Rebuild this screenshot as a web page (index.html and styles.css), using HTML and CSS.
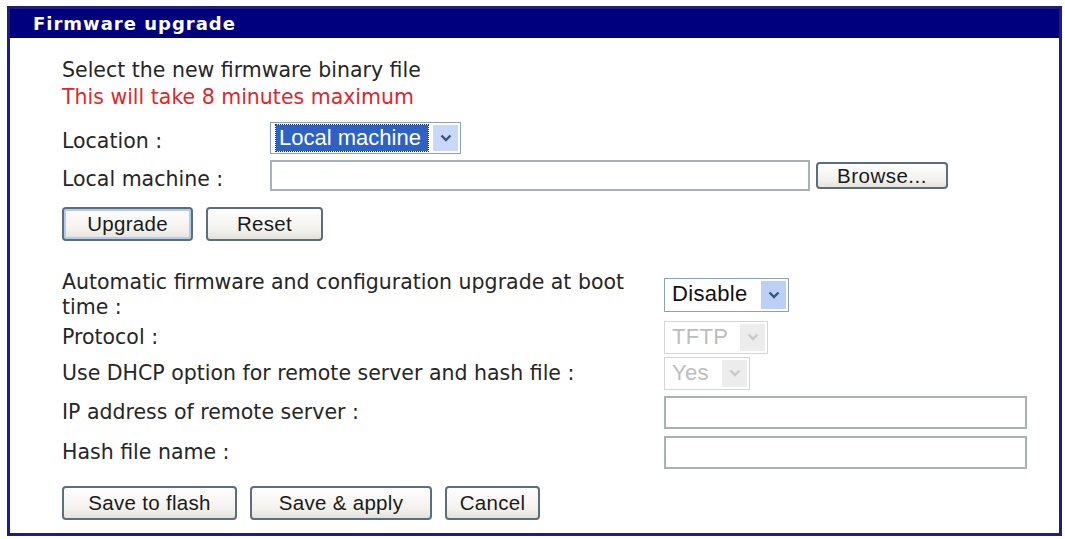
FILE: index.html
```html
<!DOCTYPE html>
<html lang="en">
<head>
    <meta charset="UTF-8">
    <meta name="viewport" content="width=device-width, initial-scale=1.0">
    <title>Firmware upgrade</title>
    <link rel="stylesheet" href="styles.css">
</head>
<body>
    <div class="panel">
        <div class="panel-title">Firmware upgrade</div>
        <div class="panel-body">
            <p class="intro">Select the new firmware binary file<br><span class="warn">This will take 8 minutes maximum</span></p>

            <div class="form-grid form-top">
                <span class="label">Location :</span>
                <div class="select select-location focused">
                    <span class="select-value">Local machine</span>
                    <span class="select-arrow"><svg viewBox="0 0 12 8" width="12" height="8"><path d="M1.5 1.5 L6 6 L10.5 1.5" /></svg></span>
                </div>
                <span class="label">Local machine :</span>
                <div class="file-row">
                    <span class="text-input file-path"></span>
                    <button class="btn btn-browse">Browse...</button>
                </div>
            </div>

            <div class="actions">
                <button class="btn btn-upgrade default">Upgrade</button>
                <button class="btn btn-reset">Reset</button>
            </div>

            <div class="form-grid form-bottom">
                <span class="label">Automatic firmware and configuration upgrade at boot time :</span>
                <div class="select select-boot">
                    <span class="select-value">Disable</span>
                    <span class="select-arrow"><svg viewBox="0 0 12 8" width="12" height="8"><path d="M1.5 1.5 L6 6 L10.5 1.5" /></svg></span>
                </div>
                <span class="label">Protocol :</span>
                <div class="select select-protocol disabled">
                    <span class="select-value">TFTP</span>
                    <span class="select-arrow"><svg viewBox="0 0 12 8" width="12" height="8"><path d="M1.5 1.5 L6 6 L10.5 1.5" /></svg></span>
                </div>
                <span class="label">Use DHCP option for remote server and hash file :</span>
                <div class="select select-dhcp disabled">
                    <span class="select-value">Yes</span>
                    <span class="select-arrow"><svg viewBox="0 0 12 8" width="12" height="8"><path d="M1.5 1.5 L6 6 L10.5 1.5" /></svg></span>
                </div>
                <span class="label">IP address of remote server :</span>
                <span class="text-input server-field"></span>
                <span class="label">Hash file name :</span>
                <span class="text-input server-field"></span>
            </div>

            <div class="actions actions-bottom">
                <button class="btn btn-flash">Save to flash</button>
                <button class="btn btn-apply">Save &amp; apply</button>
                <button class="btn btn-cancel">Cancel</button>
            </div>
        </div>
    </div>
</body>
</html>
```

FILE: styles.css
```css
body {
    margin: 0;
    background-color: #fff;
    font-family: "DejaVu Sans", Verdana, sans-serif;
    color: #262626;
}
.panel {
    margin: 6px 0 0 7px;
    width: 1055px;
    height: 530px;
    box-sizing: border-box;
    border: 3px solid #1d1d82;
}
.panel-title {
    background-color: #00007e;
    color: #fff;
    font-weight: bold;
    font-size: 18px;
    letter-spacing: 1px;
    height: 29px;
    line-height: 29px;
    padding-left: 23px;
}
.panel-body {
    padding: 19px 0 0 52px;
}
.intro {
    margin: 0;
    font-size: 20.5px;
    line-height: 27px;
}
.warn {
    color: #e0262c;
}
.label {
    font-size: 20.5px;
}
.form-grid {
    display: grid;
    align-items: center;
}
.form-top {
    grid-template-columns: 208px auto;
    row-gap: 6px;
    margin-top: 11px;
}
.form-top .label {
    padding-top: 6px;
}
.form-bottom {
    grid-template-columns: 602px auto;
    grid-template-rows: 50px 34px 38px 40px 40px;
    margin-top: 29px;
}
.form-bottom .label {
    line-height: 25px;
}
.select {
    display: flex;
    height: 32px;
    box-sizing: border-box;
    border: 1px solid #8aa2bd;
    padding: 2px;
    background-color: #fff;
    font-family: "Liberation Sans", Arial, sans-serif;
    font-size: 22px;
    letter-spacing: 0.3px;
    white-space: nowrap;
}
.select-value {
    flex: 1;
    padding-left: 5px;
    line-height: 26px;
    color: #111;
}
.select-arrow {
    width: 25px;
    margin-left: 2px;
    background-color: #bccff6;
    display: flex;
    align-items: center;
    justify-content: center;
}
.select-arrow path {
    fill: none;
    stroke: #3a5488;
    stroke-width: 2.4;
}
.select.focused .select-value {
    flex: none;
    width: 152px;
    margin: 0 3px 0 3px;
    padding-left: 3px;
    box-sizing: border-box;
    background-color: #2d62c4;
    color: #fff;
    letter-spacing: 0;
    outline: 1px dotted #1c2f60;
}
.select.focused .select-arrow {
    background-color: #c8d8fa;
}
.select.disabled {
    border-color: #d4d4d4;
}
.select.disabled .select-value {
    color: #bdbdbd;
}
.select.disabled .select-arrow {
    background-color: #ececec;
}
.select.disabled .select-arrow path {
    stroke: #c9c9c9;
}
.select-location {
    width: 191px;
}
.select-boot {
    width: 125px;
    height: 34px;
}
.select-protocol {
    width: 104px;
    height: 33px;
}
.select-dhcp {
    width: 86px;
    height: 33px;
}
.text-input {
    display: block;
    box-sizing: border-box;
    border: 2px solid #a9b0b8;
    background-color: #fff;
}
.file-row {
    display: flex;
    align-items: center;
    gap: 6px;
}
.file-path {
    width: 540px;
    height: 31px;
}
.server-field {
    width: 363px;
    height: 33px;
}
.btn {
    height: 34px;
    box-sizing: border-box;
    border: 2px solid #5c6d80;
    border-radius: 4px;
    background: linear-gradient(#fefefe, #f2f1ec 70%, #e4e2da);
    font-family: "Liberation Sans", Arial, sans-serif;
    font-size: 20.5px;
    letter-spacing: 0.3px;
    color: #1a1a1a;
    padding: 0;
}
.btn.default {
    box-shadow: inset 0 0 0 2px #b2cbef;
}
.btn-browse {
    width: 132px;
    height: 27px;
    letter-spacing: 0.5px;
}
.btn-upgrade {
    width: 131px;
}
.btn-reset {
    width: 117px;
}
.btn-flash {
    width: 175px;
}
.btn-apply {
    width: 182px;
}
.btn-cancel {
    width: 95px;
}
.actions {
    display: flex;
    gap: 13px;
    margin-top: 16px;
}
.actions-bottom {
    margin-top: 14px;
}
```
